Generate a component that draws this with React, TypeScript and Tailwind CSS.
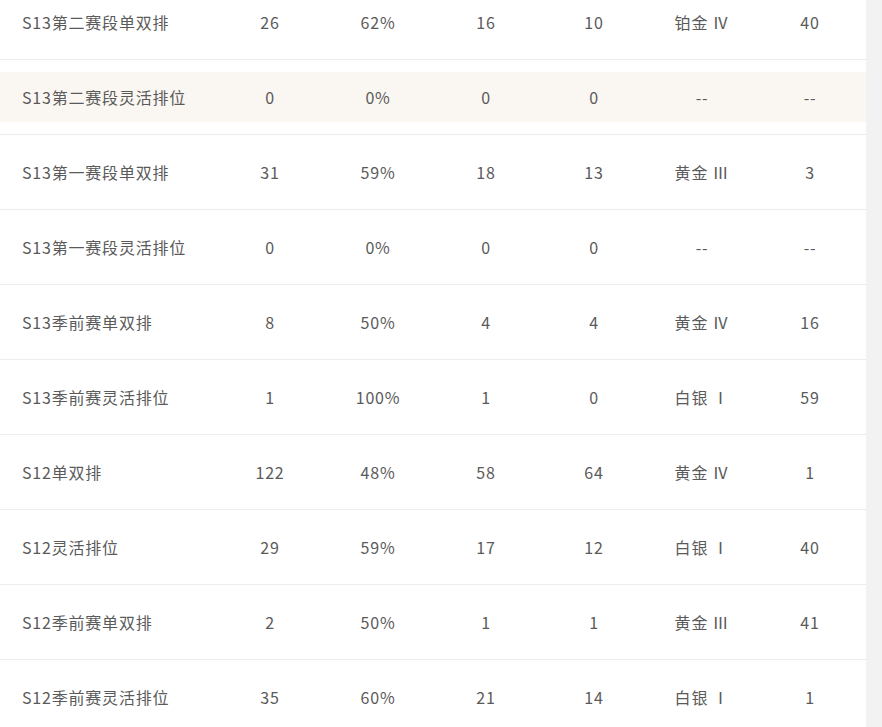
const rows: [string, string, string, string, string, string, string][] = [
  ["S13第二赛段单双排", "26", "62%", "16", "10", "铂金 Ⅳ", "40"],
  ["S13第二赛段灵活排位", "0", "0%", "0", "0", "--", "--"],
  ["S13第一赛段单双排", "31", "59%", "18", "13", "黄金 Ⅲ", "3"],
  ["S13第一赛段灵活排位", "0", "0%", "0", "0", "--", "--"],
  ["S13季前赛单双排", "8", "50%", "4", "4", "黄金 Ⅳ", "16"],
  ["S13季前赛灵活排位", "1", "100%", "1", "0", "白银 Ⅰ", "59"],
  ["S12单双排", "122", "48%", "58", "64", "黄金 Ⅳ", "1"],
  ["S12灵活排位", "29", "59%", "17", "12", "白银 Ⅰ", "40"],
  ["S12季前赛单双排", "2", "50%", "1", "1", "黄金 Ⅲ", "41"],
  ["S12季前赛灵活排位", "35", "60%", "21", "14", "白银 Ⅰ", "1"],
];

export default function App() {
  return (
    <div
      className="flex h-[727px] w-[882px] overflow-hidden bg-white text-[16px] tracking-[0.8px] text-[#5a5a5a]"
      style={{ fontFamily: '"Noto Sans CJK SC", "Noto Sans", sans-serif' }}
    >
      <div className="mt-[-15px] w-[866px] shrink-0">
        {rows.map((r, i) => (
          <div key={i} className="border-b border-[#ececec] py-[12px]">
            <div className={`grid h-[50px] grid-cols-[216px_repeat(6,108px)] items-center ${i === 1 ? "bg-[#faf7f2]" : ""}`}>
              <div className="pl-[22px]">{r[0]}</div>
              {r.slice(1).map((c, j) => (
                <div key={j} className="text-center">{c}</div>
              ))}
            </div>
          </div>
        ))}
      </div>
      <div className="flex-1 bg-[#f2f2f2]" />
    </div>
  );
}
